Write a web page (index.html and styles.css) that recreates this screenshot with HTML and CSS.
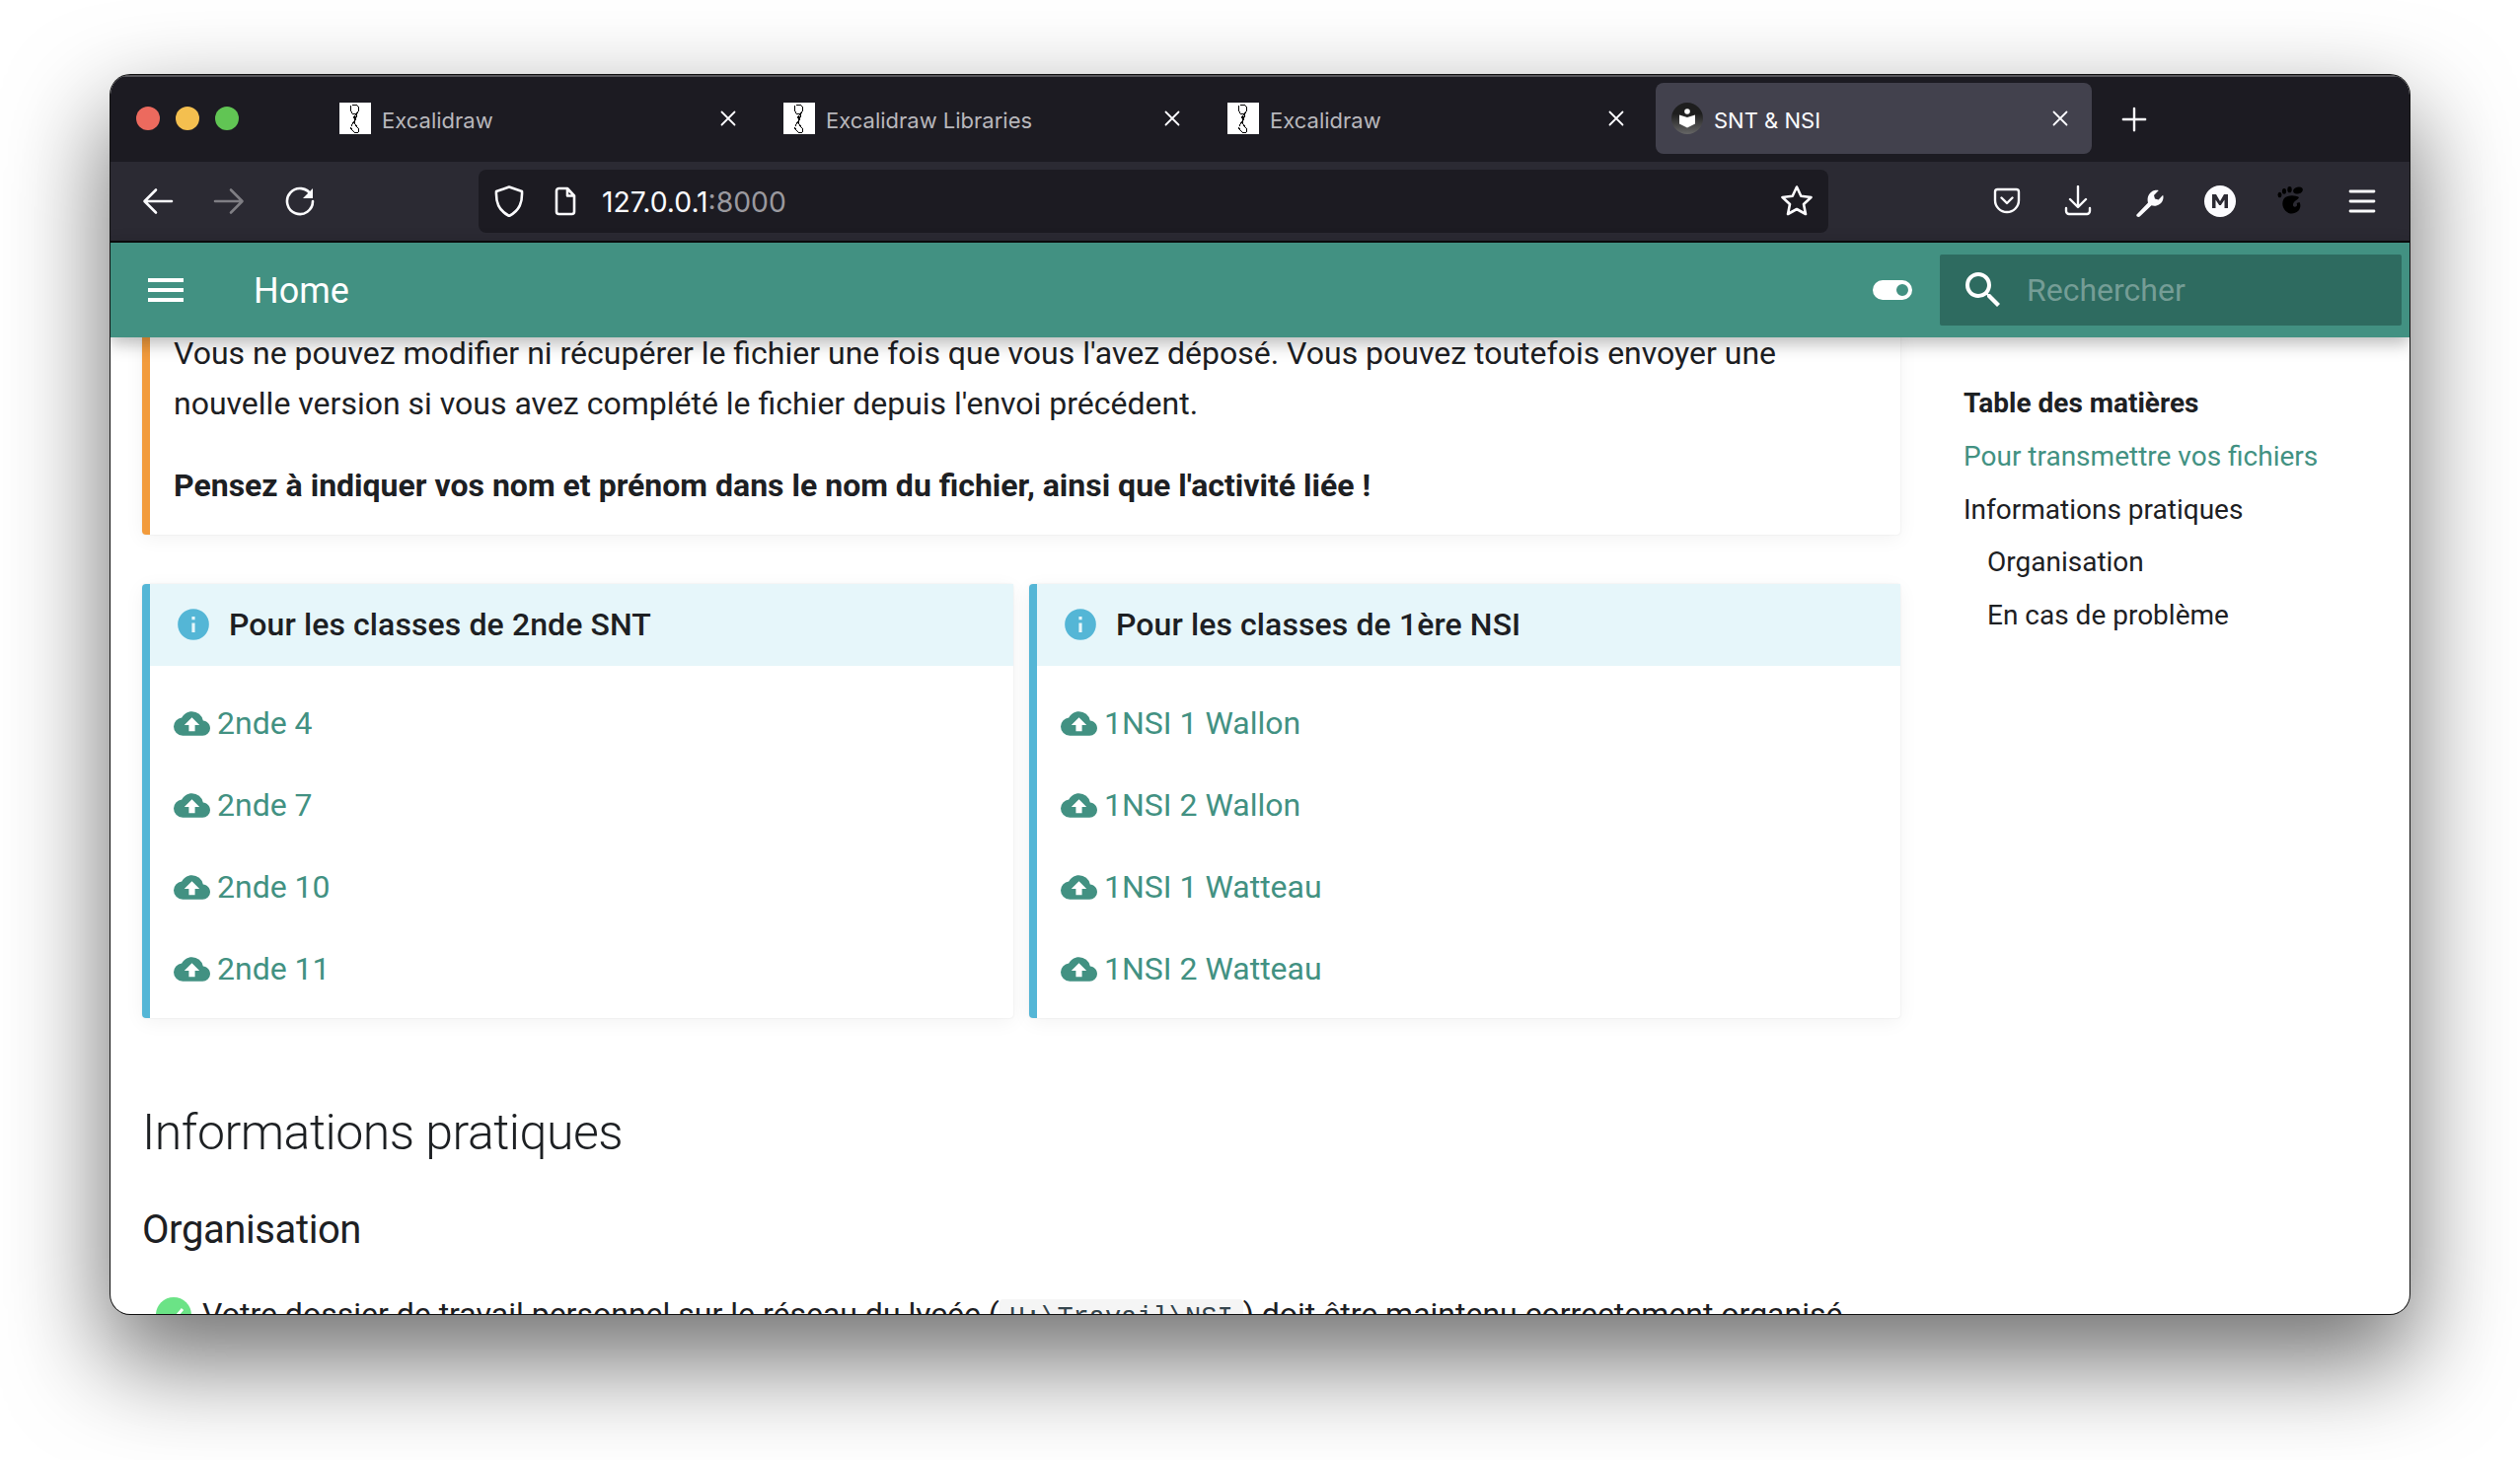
FILE: index.html
```html
<!DOCTYPE html>
<html lang="fr">
<head>
<meta charset="utf-8">
<title>SNT &amp; NSI</title>
<link rel="stylesheet" href="styles.css">
</head>
<body>
<svg class="defs" width="0" height="0">
	<defs>
		<linearGradient id="badge" x1="0" y1="0" x2="0" y2="1">
			<stop offset=".35" stop-color="#1e1e1e"/>
			<stop offset="1" stop-color="#666"/>
		</linearGradient>
	</defs>
	<symbol id="scribble" viewBox="0 0 32 32">
		<path d="M13 2h4l3 3-1 4-3 4-1 5 1 4 2 3 2 2-1 3-3 1-3-3-2-3M12 3l-1 4 2 4 1 1M20 6l-3 8-2 5-3 5M13 11l5 1-2 6-2-4" fill="none" stroke="#000" stroke-width="1" shape-rendering="crispEdges"/>
	</symbol>
	<symbol id="cloud" viewBox="0 0 24 24">
		<path d="M14 13v4h-4v-4H7l5-5 5 5m2.350-2.970A7.490 7.490 0 0 0 12 4C9.110 4 6.600 5.640 5.350 8.030A6.004 6.004 0 0 0 0 14a6 6 0 0 0 6 6h13a5 5 0 0 0 5-5c0-2.640-2.050-4.780-4.650-4.970z"/>
	</symbol>
	<symbol id="info" viewBox="0 0 24 24">
		<path d="M13 9h-2V7h2m0 10h-2v-6h2m-1-9A10 10 0 0 0 2 12a10 10 0 0 0 10 10 10 10 0 0 0 10-10A10 10 0 0 0 12 2z"/>
	</symbol>
	<symbol id="close" viewBox="0 0 20 20">
		<path d="M3.500 3.500l13 13M16.500 3.500l-13 13" fill="none" stroke="currentColor" stroke-width="1.800" stroke-linecap="round"/>
	</symbol>
</svg>

<div class="window">
	<div class="tabstrip">
		<div class="lights"><i class="light red"></i><i class="light yellow"></i><i class="light green"></i></div>
		<div class="tabs">
			<div class="tab">
				<svg class="favicon white"><use href="#scribble"/></svg>
				<span class="tab-name">Excalidraw</span>
				<svg class="tab-close"><use href="#close"/></svg>
			</div>
			<div class="tab">
				<svg class="favicon white"><use href="#scribble"/></svg>
				<span class="tab-name">Excalidraw Libraries</span>
				<svg class="tab-close"><use href="#close"/></svg>
			</div>
			<div class="tab">
				<svg class="favicon white"><use href="#scribble"/></svg>
				<span class="tab-name">Excalidraw</span>
				<svg class="tab-close"><use href="#close"/></svg>
			</div>
			<div class="tab active">
				<svg class="favicon" viewBox="0 0 32 32">
					<circle cx="16" cy="16" r="16" fill="url(#badge)"/>
					<circle cx="16" cy="9" r="2.800" fill="#fff"/>
					<path d="M8 12.500l8 2.500 8-2.500v9l-8 4-8-4z" fill="#fff"/>
				</svg>
				<span class="tab-name">SNT &amp; NSI</span>
				<svg class="tab-close"><use href="#close"/></svg>
			</div>
			<svg class="new-tab" viewBox="0 0 28 28"><path d="M14 2v24M2 14h24" stroke="#fbfbfe" stroke-width="2.600" stroke-linecap="round"/></svg>
		</div>
	</div>

	<div class="toolbar">
		<div class="nav-buttons">
			<svg class="tool" viewBox="0 0 32 32"><path d="M30 16H3M14 4.500L2.500 16 14 27.500" fill="none" stroke="#fbfbfe" stroke-width="2.600" stroke-linecap="round" stroke-linejoin="round"/></svg>
			<svg class="tool" viewBox="0 0 32 32"><path d="M2 16h27M18 4.500L29.500 16 18 27.500" fill="none" stroke="#7f7e84" stroke-width="2.600" stroke-linecap="round" stroke-linejoin="round"/></svg>
			<svg class="tool" viewBox="0 0 32 32"><path d="M27.500 10A13 13 0 1 0 29 16" fill="none" stroke="#fbfbfe" stroke-width="2.600" stroke-linecap="round"/><path d="M29 3v10H19z" fill="#fbfbfe"/></svg>
		</div>
		<div class="urlbar">
			<svg class="url-icon shield" viewBox="0 0 32 32"><path d="M16 1.500l13 4.500c.5 11-2 19-13 25C5 25 2.500 17 3 6z" fill="none" stroke="#fbfbfe" stroke-width="2.600" stroke-linejoin="round"/></svg>
			<svg class="url-icon doc" viewBox="0 0 32 32"><path d="M7 5.500a2.500 2.500 0 0 1 2.500-2.500H18l7 7.500v16a2.500 2.500 0 0 1-2.500 2.500h-13A2.500 2.500 0 0 1 7 26.500zM18 3v7.500h7" fill="none" stroke="#fbfbfe" stroke-width="2.600" stroke-linejoin="round"/></svg>
			<span class="url-text">127.0.0.1<span class="url-port">:8000</span></span>
			<svg class="url-icon star" viewBox="0 0 32 32"><path d="M16 1.500l4.300 9.200 10.200 1.300-7.500 7 2 10-9 -5-9 5 2-10-7.500-7 10.200-1.300z" fill="none" stroke="#fbfbfe" stroke-width="2.600" stroke-linejoin="round"/></svg>
		</div>
		<div class="addons">
			<svg class="tool" viewBox="0 0 32 32"><path d="M6.500 4h19A2.500 2.500 0 0 1 28 6.500V15a12 12 0 0 1-24 0V6.500A2.500 2.500 0 0 1 6.500 4z" fill="none" stroke="#fbfbfe" stroke-width="2.400"/><path d="M10.500 12.500l5.500 5.500 5.500-5.500" fill="none" stroke="#fbfbfe" stroke-width="2.400" stroke-linecap="round" stroke-linejoin="round"/></svg>
			<svg class="tool" viewBox="0 0 32 32"><path d="M16 1v20M8 14l8 8 8-8" fill="none" stroke="#fbfbfe" stroke-width="2.400" stroke-linecap="round" stroke-linejoin="round"/><path d="M4 23v3a3 3 0 0 0 3 3h18a3 3 0 0 0 3-3v-3" fill="none" stroke="#fbfbfe" stroke-width="2.400" stroke-linecap="round"/></svg>
			<svg class="tool" viewBox="0 0 32 32"><path d="M3.500 29.500L15 17.500c-1.500-5 1-11 6.500-12.500 1.500-.4 3-.4 4.300.1l-4.800 4.900 1 3.500 3.600 1 4.500-4.800c.6 1.500.5 3.200 0 4.700-1.600 5-7 7.300-11.600 5.800L6.700 31.500c-1.700 1.200-4.200-.6-3.200-2z" fill="#fbfbfe"/></svg>
			<svg class="tool" viewBox="0 0 32 32"><circle cx="16" cy="16" r="16" fill="#fbfbfe"/><path d="M8 23V9h4l4 7 4-7h4v14h-3.500v-8.500L16.800 20h-1.600l-3.700-5.500V23z" fill="#2b2a33"/></svg>
			<svg class="tool" viewBox="0 0 32 32"><g fill="#000"><ellipse cx="4.500" cy="9.500" rx="2" ry="2.700"/><ellipse cx="9" cy="5.800" rx="2.100" ry="2.900"/><ellipse cx="14.500" cy="4.200" rx="2.200" ry="3.100"/><ellipse cx="23" cy="5" rx="5" ry="3.400" transform="rotate(-15 23 5)"/><path d="M9 13c4-4 12-3 15-1-1 3-5 3-6 7-.6 2.500 2 3.500 3.500 2 1-1 .5-2.500 0-3l3-1c1.800 3 .8 7-1.500 9-3 2.800-8 3.500-11 1C7 24 6 17 9 13z"/></g></svg>
			<svg class="tool" viewBox="0 0 32 32"><path d="M4 6h24M4 16h24M4 26h24" stroke="#fbfbfe" stroke-width="2.800" stroke-linecap="round"/></svg>
		</div>
	</div>

	<header class="site-header">
		<svg class="burger" viewBox="0 0 36 24"><path d="M0 0h36v4H0zM0 10h36v4H0zM0 20h36v4H0z" fill="#fff"/></svg>
		<span class="site-title">Home</span>
		<svg class="toggle" viewBox="0 0 40 20"><path fill-rule="evenodd" d="M10 0h20a10 10 0 0 1 0 20H10a10 10 0 0 1 0-20zm20 4a6 6 0 1 0 0 12 6 6 0 0 0 0-12z" fill="#fff"/></svg>
		<div class="search">
			<svg class="search-icon" viewBox="0 0 24 24"><path d="M9.500 3A6.500 6.500 0 0 1 16 9.500c0 1.610-.59 3.090-1.560 4.230l.27.270h.79l5 5-1.500 1.500-5-5v-.79l-.27-.27A6.516 6.516 0 0 1 9.500 16 6.500 6.500 0 0 1 3 9.500 6.500 6.500 0 0 1 9.500 3m0 2C7 5 5 7 5 9.500S7 14 9.500 14 14 12 14 9.500 12 5 9.500 5z" fill="#fff"/></svg>
			<span class="search-text">Rechercher</span>
		</div>
	</header>

	<div class="page">
		<main class="content">
			<div class="alert">
				<p>Vous ne pouvez modifier ni récupérer le fichier une fois que vous l'avez déposé. Vous pouvez toutefois envoyer une nouvelle version si vous avez complété le fichier depuis l'envoi précédent.</p>
				<p class="strong">Pensez à indiquer vos nom et prénom dans le nom du fichier, ainsi que l'activité liée !</p>
			</div>

			<div class="cards">
				<section class="card">
					<h3 class="card-title"><svg class="info-icon"><use href="#info"/></svg>Pour les classes de 2nde SNT</h3>
					<ul class="card-links">
						<li><svg class="cloud"><use href="#cloud"/></svg>2nde 4</li>
						<li><svg class="cloud"><use href="#cloud"/></svg>2nde 7</li>
						<li><svg class="cloud"><use href="#cloud"/></svg>2nde 10</li>
						<li><svg class="cloud"><use href="#cloud"/></svg>2nde 11</li>
					</ul>
				</section>
				<section class="card">
					<h3 class="card-title"><svg class="info-icon"><use href="#info"/></svg>Pour les classes de 1ère NSI</h3>
					<ul class="card-links">
						<li><svg class="cloud"><use href="#cloud"/></svg>1NSI 1 Wallon</li>
						<li><svg class="cloud"><use href="#cloud"/></svg>1NSI 2 Wallon</li>
						<li><svg class="cloud"><use href="#cloud"/></svg>1NSI 1 Watteau</li>
						<li><svg class="cloud"><use href="#cloud"/></svg>1NSI 2 Watteau</li>
					</ul>
				</section>
			</div>

			<h2 class="section-title">Informations pratiques</h2>
			<h3 class="sub-title">Organisation</h3>
			<p class="task">
				<svg class="check" viewBox="0 0 36 36"><circle cx="18" cy="18" r="18" fill="#6be386"/><path d="M10 19l6 6 11-13" fill="none" stroke="#fff" stroke-width="3"/></svg>
				<span>Votre dossier de travail personnel sur le réseau du lycée (<code class="path">H:\Travail\NSI</code>) doit être maintenu correctement organisé.</span>
			</p>
		</main>

		<nav class="toc">
			<div class="toc-title">Table des matières</div>
			<a class="toc-link current">Pour transmettre vos fichiers</a>
			<a class="toc-link">Informations pratiques</a>
			<a class="toc-link nested">Organisation</a>
			<a class="toc-link nested">En cas de problème</a>
		</nav>
	</div>
</div>
</body>
</html>
```

FILE: styles.css
```css
html, body {
	margin: 0;
	padding: 0;
	background: #fff;
}
body {
	height: 1480px;
	box-sizing: border-box;
	padding: 76px 112px 0;
	overflow: hidden;
	font-family: Roboto, sans-serif;
}
.defs {
	position: absolute;
}
.window {
	width: 2330px;
	height: 1256px;
	border-radius: 20px;
	overflow: hidden;
	background: #fff;
	box-shadow: 0 0 0 1px #111, 0 44px 100px 4px rgba(0, 0, 0, .56);
}

/* browser chrome */
.tabstrip {
	height: 88px;
	box-sizing: border-box;
	display: flex;
	background: #1c1b22;
	border-top: 2px solid #56555a;
}
.lights {
	display: flex;
	gap: 16px;
	padding: 30px 0 0 26px;
	width: 190px;
	box-sizing: border-box;
}
.light {
	width: 24px;
	height: 24px;
	border-radius: 50%;
}
.red { background: #ec6a5e; }
.yellow { background: #f4bf4f; }
.green { background: #61c554; }
.tabs {
	display: flex;
	align-items: flex-start;
	gap: 8px;
	padding: 6px 0 0 26px;
}
.tab {
	width: 442px;
	height: 72px;
	box-sizing: border-box;
	padding: 0 22px 0 16px;
	display: flex;
	align-items: center;
	border-radius: 8px;
	color: #b8b7bc;
}
.tab.active {
	background: #42414d;
	color: #fbfbfe;
}
.favicon {
	width: 32px;
	height: 32px;
	flex: none;
}
.favicon.white {
	background: #fff;
}
.tab-name {
	flex: 1;
	margin-left: 11px;
	padding-top: 3px;
	font: 400 22px Inter, sans-serif;
}
.tab-close {
	width: 20px;
	height: 20px;
	color: #fbfbfe;
}
.new-tab {
	width: 26px;
	height: 26px;
	margin: 24px 0 0 22px;
}
.toolbar {
	height: 80px;
	display: flex;
	align-items: center;
	background: #2b2a33;
	border-bottom: 2px solid #0c0c0d;
}
.nav-buttons {
	display: flex;
	gap: 40px;
	padding-left: 32px;
	width: 373px;
	box-sizing: border-box;
}
.tool {
	width: 32px;
	height: 32px;
	flex: none;
}
.urlbar {
	width: 1368px;
	height: 64px;
	display: flex;
	align-items: center;
	background: #1c1b22;
	border-radius: 8px;
	color: #fbfbfe;
}
.url-icon {
	width: 32px;
	height: 32px;
	flex: none;
}
.shield {
	margin-left: 15px;
}
.doc {
	margin-left: 25px;
}
.url-text {
	flex: 1;
	margin-left: 21px;
	padding-top: 2px;
	font: 400 28.300px Inter, sans-serif;
}
.url-port {
	color: #9a999f;
}
.star {
	margin-right: 16px;
}
.addons {
	display: flex;
	gap: 40px;
	padding-left: 165px;
}

/* site */
.site-header {
	position: relative;
	z-index: 2;
	height: 96px;
	display: flex;
	align-items: center;
	padding: 0 8px 0 38px;
	background: #429182;
	box-shadow: 0 0 16px rgba(0, 0, 0, .1), 0 8px 16px rgba(0, 0, 0, .2);
}
.burger {
	width: 36px;
	height: 24px;
}
.site-title {
	flex: 1;
	margin-left: 71px;
	padding-top: 2px;
	color: #fff;
	font-size: 36px;
	font-weight: 400;
}
.toggle {
	width: 40px;
	height: 20px;
	margin-right: 28px;
}
.search {
	width: 468px;
	height: 72px;
	display: flex;
	align-items: center;
	background: #2e6b60;
	border-radius: 2px;
}
.search-icon {
	width: 48px;
	height: 48px;
	margin-left: 20px;
}
.search-text {
	margin-left: 20px;
	font-size: 32px;
	color: rgba(255, 255, 255, .35);
}
.page {
	display: flex;
	height: 990px;
	overflow: hidden;
	color: #1d2023;
}
.content {
	width: 1782px;
	flex: none;
	margin: -9px 0 0 32px;
	font-size: 32px;
	line-height: 51.200px;
}
.content p {
	margin: 0;
}
.alert {
	border-left: 8px solid #f29b3c;
	border-radius: 4px;
	padding: 0 24px 23px;
	box-shadow: 0 4px 20px rgba(0, 0, 0, .05), 0 0 2px rgba(0, 0, 0, .1);
}
.alert .strong {
	margin-top: 32px;
	font-weight: 700;
}
.cards {
	display: flex;
	gap: 16px;
	margin-top: 50px;
}
.card {
	width: 883px;
	border-left: 8px solid #54b6d6;
	border-radius: 4px;
	box-shadow: 0 4px 20px rgba(0, 0, 0, .05), 0 0 2px rgba(0, 0, 0, .1);
}
.card-title {
	height: 83px;
	margin: 0;
	display: flex;
	align-items: center;
	padding-left: 25px;
	background: #e6f6fa;
	font-size: 32px;
	font-weight: 500;
	letter-spacing: .1px;
}
.info-icon {
	width: 38px;
	height: 38px;
	margin-right: 17px;
	fill: #54b6d6;
}
.card-links {
	list-style: none;
	margin: 0;
	padding: 33px 24px 24px;
	color: #429182;
}
.card-links li {
	display: flex;
	align-items: center;
}
.card-links li + li {
	margin-top: 32px;
}
.cloud {
	width: 37px;
	height: 37px;
	margin-right: 7px;
	fill: #429182;
}
.section-title {
	margin: 84px 0 0;
	font-size: 50px;
	line-height: 65px;
	font-weight: 300;
	letter-spacing: -.01em;
}
.sub-title {
	margin: 38px 0 0;
	font-size: 40px;
	line-height: 56px;
	font-weight: 400;
	letter-spacing: -.01em;
}
.content .task {
	margin: 32px 0 0 14px;
	display: flex;
	white-space: nowrap;
}
.check {
	width: 36px;
	height: 36px;
	flex: none;
	margin: 8px 11px 0 0;
}
.path {
	padding: 4px 10px;
	border-radius: 4px;
	background: #f5f5f5;
	color: #36464e;
	font: 400 27px "Liberation Mono", monospace;
}
.toc {
	padding: 49px 0 0 64px;
	display: flex;
	flex-direction: column;
	gap: 17.400px;
	font-size: 28px;
	line-height: 36.400px;
}
.toc-title {
	font-weight: 700;
}
.toc-link.current {
	color: #429182;
}
.toc-link.nested {
	margin-left: 24px;
}
```
